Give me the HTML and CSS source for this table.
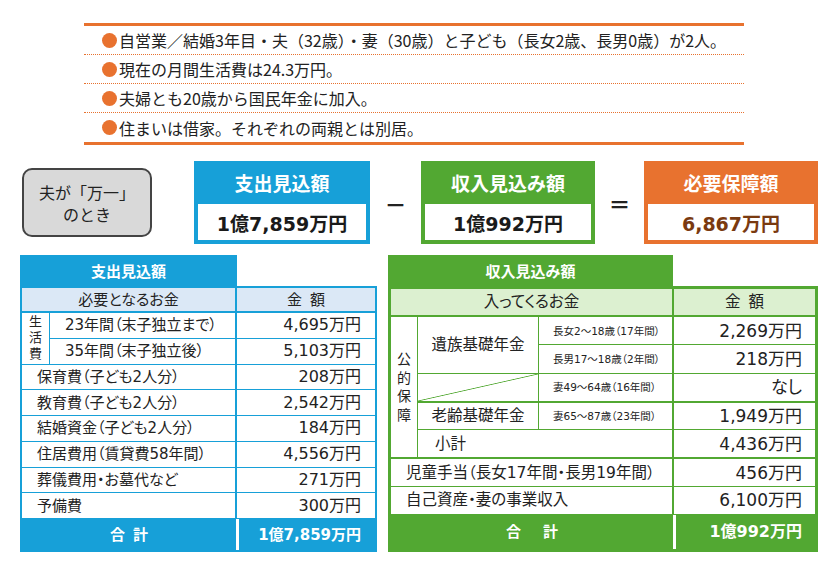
FILE: index.html
```html
<!DOCTYPE html>
<html lang="ja">
<head>
<meta charset="utf-8">
<title>必要保障額</title>
<link rel="stylesheet" href="styles.css">
</head>
<body>
<div class="page">
  <ul class="facts">
    <li>自営業／結婚3年目・夫（32歳）・妻（30歳）と子ども（長女2歳、長男0歳）が2人。</li>
    <li>現在の月間生活費は24.3万円。</li>
    <li>夫婦とも20歳から国民年金に加入。</li>
    <li>住まいは借家。それぞれの両親とは別居。</li>
  </ul>

  <div class="summary">
    <div class="when"><span>夫が「万一」</span><span>のとき</span></div>
    <div class="box box-blue">
      <div class="box-title">支出見込額</div>
      <div class="box-value">1億7,859万円</div>
    </div>
    <div class="op">－</div>
    <div class="box box-green">
      <div class="box-title">収入見込み額</div>
      <div class="box-value">1億992万円</div>
    </div>
    <div class="op op-eq">＝</div>
    <div class="box box-orange">
      <div class="box-title">必要保障額</div>
      <div class="box-value">6,867万円</div>
    </div>
  </div>

  <div class="tables">
    <div class="panel panel-blue">
      <div class="panel-title">支出見込額</div>
      <table class="tbl tbl-blue">
        <colgroup><col class="wb1"><col class="wb2"><col class="wb3"></colgroup>
        <thead>
          <tr><th colspan="2">必要となるお金</th><th class="amt-col">金<span class="sp-s"></span>額</th></tr>
        </thead>
        <tbody>
          <tr><td rowspan="2" class="vert"><span>生</span><span>活</span><span>費</span></td><td class="lbl">23年間（末子独立まで）</td><td class="amt">4,695万円</td></tr>
          <tr><td class="lbl">35年間（末子独立後）</td><td class="amt">5,103万円</td></tr>
          <tr><td colspan="2" class="lbl">保育費（子ども2人分）</td><td class="amt">208万円</td></tr>
          <tr><td colspan="2" class="lbl">教育費（子ども2人分）</td><td class="amt">2,542万円</td></tr>
          <tr><td colspan="2" class="lbl">結婚資金（子ども2人分）</td><td class="amt">184万円</td></tr>
          <tr><td colspan="2" class="lbl">住居費用（賃貸費58年間）</td><td class="amt">4,556万円</td></tr>
          <tr><td colspan="2" class="lbl">葬儀費用・お墓代など</td><td class="amt">271万円</td></tr>
          <tr><td colspan="2" class="lbl">予備費</td><td class="amt">300万円</td></tr>
        </tbody>
        <tfoot>
          <tr><td colspan="2" class="tot-l">合<span class="sp-s"></span>計</td><td class="tot-r">1億7,859万円</td></tr>
        </tfoot>
      </table>
    </div>

    <div class="panel panel-green">
      <div class="panel-title">収入見込み額</div>
      <table class="tbl tbl-green">
        <colgroup><col class="wg1"><col class="wg2"><col class="wg3"><col class="wg4"></colgroup>
        <thead>
          <tr><th colspan="3">入ってくるお金</th><th class="amt-col">金<span class="sp-s"></span>額</th></tr>
        </thead>
        <tbody>
          <tr><td rowspan="5" class="vert vert-g"><span>公</span><span>的</span><span>保</span><span>障</span></td><td rowspan="2" class="nm">遺族基礎年金</td><td class="sub">長女2～18歳（17年間）</td><td class="amt">2,269万円</td></tr>
          <tr><td class="sub">長男17～18歳（2年間）</td><td class="amt">218万円</td></tr>
          <tr><td class="diag"></td><td class="sub">妻49～64歳（16年間）</td><td class="amt">なし</td></tr>
          <tr class="thick"><td class="nm">老齢基礎年金</td><td class="sub">妻65～87歳（23年間）</td><td class="amt">1,949万円</td></tr>
          <tr><td colspan="2" class="lbl lbl-sub">小計</td><td class="amt">4,436万円</td></tr>
          <tr class="thick"><td colspan="3" class="lbl">児童手当（長女17年間・長男19年間）</td><td class="amt">456万円</td></tr>
          <tr><td colspan="3" class="lbl">自己資産・妻の事業収入</td><td class="amt">6,100万円</td></tr>
        </tbody>
        <tfoot>
          <tr><td colspan="3" class="tot-l">合<span class="sp-l"></span>計</td><td class="tot-r">1億992万円</td></tr>
        </tfoot>
      </table>
    </div>
  </div>
</div>
</body>
</html>
```

FILE: styles.css
```css
* { box-sizing: border-box; }
html, body { margin: 0; padding: 0; background: #fff; }
body {
  font-family: "DejaVu Sans", "Noto Sans CJK JP", sans-serif;
  color: #222;
}
.page { width: 834px; height: 571px; overflow: hidden; padding-top: 23px; }

/* facts list */
.facts {
  list-style: none;
  margin: 0 0 0 84px;
  padding: 0;
  width: 660px;
  border-top: 3px solid #e8722f;
  border-bottom: 3px solid #e8722f;
}
.facts li {
  display: flex;
  align-items: center;
  height: 29px;
  padding-left: 18px;
  font-size: 16px;
  line-height: 20px;
  border-bottom: 1px dotted #e8722f;
  font-family: "Noto Sans CJK JP", sans-serif;
}
.facts li:last-child { border-bottom: 0; }
.facts li::before {
  content: "";
  flex: none;
  width: 15px;
  height: 15px;
  border-radius: 50%;
  background: #e8722f;
  margin-right: 2px;
}

/* summary */
.summary {
  display: flex;
  align-items: center;
  margin: 16px 0 0 22px;
  height: 83px;
}
.when {
  width: 130px;
  height: 69px;
  border: 2px solid #444;
  border-radius: 10px;
  background: #d9d9d9;
  display: flex;
  flex-direction: column;
  align-items: center;
  justify-content: center;
  font-family: "Noto Sans CJK JP", sans-serif;
  font-size: 16px;
  line-height: 22px;
  margin-right: 42px;
}
.box {
  width: 176px;
  height: 83px;
  padding: 0 4px 4px;
  display: flex;
  flex-direction: column;
}
.box-title {
  height: 43px;
  display: flex;
  align-items: center;
  justify-content: center;
  color: #fff;
  font-weight: bold;
  font-size: 19px;
  font-family: "Noto Sans CJK JP", sans-serif;
}
.box-value {
  flex: 1;
  background: #fff;
  display: flex;
  align-items: center;
  justify-content: center;
  font-weight: bold;
  font-size: 19px;
  color: #1a1a1a;
}
.box-blue { background: #17a0d8; }
.box-green { background: #52a832; width: 174px; }
.box-orange { background: #e8722f; width: 174px; }
.box-orange .box-value { color: #7a3a10; }
.op {
  width: 51px;
  text-align: center;
  font-size: 22px;
  font-weight: bold;
  font-family: "Noto Sans CJK JP", sans-serif;
}
.op-eq { width: 49px; }

/* tables */
.tables {
  display: flex;
  align-items: flex-start;
  gap: 11px;
  margin: 11px 0 0 20px;
}
.panel-title {
  height: 31px;
  display: flex;
  align-items: center;
  justify-content: center;
  color: #fff;
  font-weight: bold;
  font-size: 15px;
  font-family: "Noto Sans CJK JP", sans-serif;
}
.panel-blue { width: 357px; }
.panel-blue .panel-title { width: 217px; background: #17a0d8; }
.panel-green { width: 430px; }
.panel-green .panel-title { width: 285px; background: #52a832; }

.tbl {
  border-collapse: separate;
  border-spacing: 0;
  table-layout: fixed;
  width: 100%;
  font-size: 15px;
  line-height: 18px;
  font-feature-settings: "palt";
}
.tbl td, .tbl th { padding: 0; font-weight: normal; }
.wb1 { width: 28px; }
.wb2 { width: 186px; }
.wb3 { width: 139px; }
.wg1 { width: 27px; }
.wg2 { width: 121px; }
.wg3 { width: 134px; }
.wg4 { width: 142px; }

.sp-s { display: inline-block; width: 8px; }
.sp-l { display: inline-block; width: 22px; }

.tbl .lbl { text-align: left; padding-left: 15px; }
.tbl .amt { text-align: right; padding-right: 14px; font-size: 16px; }
.tbl .vert span { display: block; text-align: center; font-size: 13px; line-height: 16px; }

/* blue table */
.tbl-blue { border: 2px solid #17a0d8; }
.tbl-blue td, .tbl-blue th {
  border-right: 1px solid #17a0d8;
  border-bottom: 1px solid #17a0d8;
}
.tbl-blue .amt-col, .tbl-blue .amt { border-right: 0; border-left: 1px solid #17a0d8; }
.tbl-blue thead tr { height: 25px; }
.tbl-blue thead th {
  background: #dbe8f6;
  border-bottom: 2px solid #17a0d8;
}
.tbl-blue tbody tr { height: 25.75px; }
.tbl-blue tfoot tr { height: 31px; }

/* green table */
.tbl-green { border: 3px solid #52a832; }
.tbl-green td, .tbl-green th {
  border-right: 1px solid #52a832;
  border-bottom: 1px solid #52a832;
}
.tbl-green .amt-col, .tbl-green .amt { border-right: 0; border-left: 1px solid #52a832; }
.tbl-green thead tr { height: 28px; }
.tbl-green thead th {
  background: #dcf0d0;
  border-bottom: 2px solid #52a832;
  font-size: 15.5px;
}
.tbl-green tbody tr { height: 28.3px; }
.tbl-green tr.thick td { border-top: 1px solid #52a832; }
.tbl-green tfoot tr { height: 34px; }
.tbl-green .amt { font-size: 17px; padding-right: 13px; }
.tbl-green .lbl { font-size: 15.5px; padding-left: 15px; }
.tbl-green .lbl-sub { padding-left: 17px; }
.tbl .nm { text-align: center; font-size: 15.5px; }
.tbl .sub { text-align: left; padding-left: 14px; font-size: 10.5px; }
.tbl .vert-g span { font-size: 14px; line-height: 18.5px; }
.tbl .diag {
  background: linear-gradient(to bottom right, transparent calc(50% - 0.8px), #52a832 50%, transparent calc(50% + 0.8px));
}

/* totals */
.tbl tfoot td { border: 0; }
.tbl .tot-l, .tbl .tot-r {
  color: #fff;
  font-weight: bold;
  font-size: 15px;
}
.tbl .tot-l { text-align: center; }
.tbl .tot-r { text-align: right; padding-right: 14px; }
.tbl-blue tfoot td { background: #17a0d8; }
.tbl-blue tfoot .tot-r { border-left: 3px solid #fff; }
.tbl-green tfoot td { background: #52a832; }
.tbl-green tfoot .tot-r { border-left: 3px solid #fff; padding-right: 13px; font-size: 16px; }
```
